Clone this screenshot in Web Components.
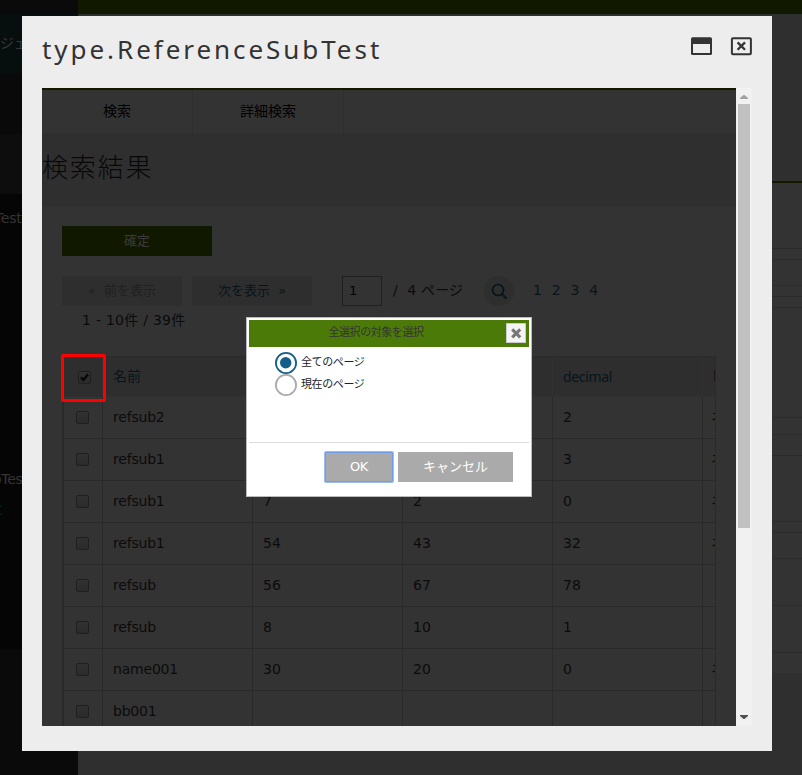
<!DOCTYPE html>
<html lang="ja"><head><meta charset="utf-8"><title>type.ReferenceSubTest</title>
<style>
html,body{margin:0;height:100%;overflow:hidden;background:#2f2f2f}
body{font:14px "DejaVu Sans","Noto Sans CJK JP",sans-serif;color:#0b0b0b}
</style></head><body><app-screen></app-screen>
<script>
const define=(name,html,setup)=>customElements.define(name,class extends HTMLElement{
  constructor(){super();this.attachShadow({mode:'open'})}
  connectedCallback(){
    this.shadowRoot.innerHTML='<style>*{box-sizing:border-box}:host{box-sizing:border-box}</style>'+(typeof html==='function'?html(this):html);
  }
});

define('side-menu',`<style>:host{display:block;width:78px;flex:none;background:#0a0a0a;color:#353535;overflow:hidden;white-space:nowrap;letter-spacing:-.3px}
div{overflow:hidden}
.a{height:14px}.b{height:60px;background:#070e0e;line-height:58px}.c{height:60px;background:#090909}.d{height:60px;background:#0d0d0d}
.e{height:455px;background:#050505;display:flex;flex-direction:column}
.e span{display:block;line-height:20px}.t1{padding-top:14px;text-indent:-5px}.t2{margin-top:241px;text-indent:-7px}.t3{margin-top:10px;color:#062820;text-indent:-10px}</style>
<div class="a"></div><div class="b">ジェ</div><div class="c"></div><div class="d"></div>
<div class="e"><span class="t1">Test</span><span class="t2">oTest</span><span class="t3">ヒ</span></div>`);

define('back-page',`<style>:host{display:flex;flex-direction:column;flex:1;background:#2f2f2f}
.bar{height:14px;background:#101900}.gap{height:167px}.rule{height:2px;background:#101900}
.body{background:#333;height:490px}.body div{border-bottom:1px solid #2b2b2b}</style>
<div class="bar"></div><div class="gap"></div><div class="rule"></div><div class="body">${[66,11,26,11,11,110,17,21,66,11,26,47,47].map(h=>`<div style="height:${h}px"></div>`).join('')}</div>`);

define('window-icons',`<style>:host{display:flex;gap:18px}svg{display:block}</style>
<svg width="22" height="20" viewBox="0 0 22 20"><rect x="1" y="1.2" width="21" height="17.8" rx="1.6" fill="#333"/><rect x="3" y="8" width="17" height="9" fill="#ededed"/></svg>
<svg width="22" height="20" viewBox="0 0 22 20"><rect x="1.9" y="2.2" width="19" height="16" rx="1" fill="none" stroke="#333" stroke-width="2"/><path d="M7.6 6.4l7.4 7.4M15 6.4l-7.4 7.4" stroke="#333" stroke-width="2.3"/></svg>`);

define('scroll-rail',`<style>:host{display:flex;flex-direction:column;align-items:center;width:16px;flex:none;background:#f1f1f1}
svg{display:block;flex:none}.t{width:12px;background:#c1c1c1;flex:1;margin-bottom:182px}</style>
<svg width="16" height="16"><path d="M4 11h8v-1L8.5 7h-1L4 10z" fill="#a3a3a3"/></svg><div class="t"></div>
<svg width="16" height="16"><path d="M4 5h8v1L8.5 9h-1L4 6z" fill="#505050"/></svg>`);

define('tab-bar',`<style>:host{display:flex;height:45px;border-top:2px solid #101900;background:#333}
div{width:151px;border-right:1px solid #2e2e2e;text-align:center;line-height:43px;color:#000}</style><div>検索</div><div>詳細検索</div>`);

define('page-heading',`<style>:host{display:block;height:73px;background:#2f2f2f;font-size:26px;letter-spacing:1.8px;line-height:70px;font-weight:300;color:#080808}</style><slot></slot>`);

define('flat-button',`<style>:host{display:block;flex:none;height:30px;line-height:29px;text-align:center;font-size:13px;background:#2e2e2e;color:#06151c;white-space:pre}
:host([kind=primary]){width:150px;background:#101900;color:#3a3a3a}
:host([kind=off]){width:120px;color:#202020}:host([kind=page]){width:120px}
:host([kind=ok]),:host([kind=cancel]){background:#aaa;color:#fff}
:host([kind=ok]){width:68px;height:30px;border:1px solid #6f9ee8;box-shadow:0 0 0 1px #9abdf4;border-radius:1px;line-height:28px;letter-spacing:-.4px;margin-right:1px}
:host([kind=cancel]){width:115px}</style><slot></slot>`);

define('pager-bar',`<style>:host{display:flex;height:30px;line-height:28px;align-items:stretch}
flat-button+flat-button{margin-left:10px}
.in{width:40px;border:1px solid #202020;margin-left:30px;padding-left:6px;font-size:13px;color:#000}
.of{margin-left:11px;width:91px;white-space:pre;letter-spacing:.2px}svg{flex:none}.n{display:flex;margin-left:19px;gap:9.8px;color:#06151c}</style>
<flat-button kind="off">«  前を表示</flat-button><flat-button kind="page">次を表示  »</flat-button>
<div class="in">1</div><div class="of">/  4 ページ</div>
<svg width="30" height="30"><circle cx="15" cy="15" r="15" fill="#2e2e2e"/><circle cx="14" cy="14" r="5.5" fill="none" stroke="#06151c" stroke-width="1.7"/><path d="M18 18l4.4 4.6" stroke="#06151c" stroke-width="2"/></svg>
<div class="n"><span>1</span><span>2</span><span>3</span><span>4</span></div>`);

define('check-box',e=>`<style>:host{display:block;width:13px;height:13px;border:1px solid #1f1f1f;border-radius:2px;background:linear-gradient(#313131,#2b2b2b)}
svg{display:block}</style>${e.hasAttribute('checked')?'<svg width="11" height="11"><path d="M2 5.4L4.5 8L9 2.3" fill="none" stroke="#080808" stroke-width="2.4"/></svg>':''}`);

const rows=[['refsub2','','','2','ネ'],['refsub1','','','3','ネ'],['refsub1','7','2','0','ネ'],['refsub1','54','43','32','ネ'],['refsub','56','67','78',''],['refsub','8','10','1',''],['name001','30','20','0','ネ'],['bb001','','','','']];
define('result-table',`<style>:host{display:block;width:654px;height:370px;overflow:hidden;border-left:2px solid #2a2a2a;border-right:1px solid #2a2a2a;border-top:1px solid #2a2a2a}
.r{display:grid;grid-template-columns:39px 150px 150px 150px 150px 150px;height:42px;border-bottom:1px solid #292929}
.r>div{border-right:1px solid #292929;padding-left:10px;line-height:41px;overflow:hidden;white-space:nowrap}
.r>div:last-child{text-indent:-2px}
.n{letter-spacing:-.2px}
.r>.k{padding:14px 0 0 12px}.h{background:#2e2e2e;height:40px;border-bottom-color:#303030;color:#06151c}.r.h>div{border-color:#313131;line-height:39px}.h>.k{padding:14px 0 0 14px}
.h .s{font-family:"Noto Sans",sans-serif;letter-spacing:-.35px}</style>
<div class="r h"><div class="k"><check-box checked></check-box></div><div>名前</div><div></div><div></div><div class="s">decimal</div><div style="text-indent:0;color:#0b0b0b">l</div></div>
${rows.map(r=>`<div class="r"><div class="k"><check-box></check-box></div>${r.map((c,i)=>`<div class="${i?'':'n'}">${c}</div>`).join('')}</div>`).join('')}`);

define('frame-page',`<style>:host{display:block;flex:1;min-width:0;background:#333;overflow:hidden}
main{padding:20px 20px 0}pager-bar{margin-top:20px}.c{padding-left:20px;height:30px;line-height:28px;margin-bottom:20px;letter-spacing:.26px}</style>
<tab-bar></tab-bar><page-heading>検索結果</page-heading>
<main><flat-button kind="primary">確定</flat-button><pager-bar></pager-bar><div class="c">1 - 10件 / 39件</div><result-table></result-table></main>`);

define('frame-window',`<style>:host{display:flex;flex-direction:column;background:#ededed;padding:0 20px 25px}
header{height:72px;flex:none;display:flex;justify-content:space-between}
h1{margin:0;font:400 26px/67px "Noto Sans",sans-serif;letter-spacing:2.95px;color:#333;white-space:nowrap}
window-icons{padding-top:20px}.b{flex:1;min-height:0;display:flex}</style>
<header><h1>type.ReferenceSubTest</h1><window-icons></window-icons></header><div class="b"><frame-page></frame-page><scroll-rail></scroll-rail></div>`);

define('radio-line',e=>`<style>:host{display:flex;height:22px;align-items:center;gap:4px;font-size:11px;letter-spacing:-.4px;line-height:20px;color:#222}svg{flex:none}span{padding-bottom:0}</style>
<svg width="22" height="22"><circle cx="11" cy="11" r="10.1" fill="#fff" stroke="${e.hasAttribute('on')?'#145f87':'#aaa'}" stroke-width="1.8"/>${e.hasAttribute('on')?'<circle cx="10.7" cy="10.7" r="5.7" fill="#145f87"/>':''}</svg><span><slot></slot></span>`);

define('select-dialog',`<style>:host{display:flex;flex-direction:column;background:#fff;border:1px solid #bbb;padding:2px}
header{height:27px;flex:none;background:#4c7a09;display:flex;color:#333;font-size:11px;letter-spacing:-.43px;line-height:25px}
h2{margin:0;flex:1;font:inherit;text-align:center;padding-right:3px}
.x{width:20px;height:20px;background:#f4f4f4;border:1px solid #ccc;margin:3px 3px 0 0}svg{display:block}
.b{height:95px;padding:5px 0 0 26px}footer{flex:1;border-top:1px solid #ddd;display:flex;justify-content:flex-end;gap:4px;padding:9px 16px 0 0}</style>
<header><h2>全選択の対象を選択</h2><div class="x"><svg width="18" height="18"><path d="M5.2 5.4l8 8M13.2 5.4l-8 8" stroke="#777" stroke-width="3"/></svg></div></header>
<div class="b"><radio-line on>全てのページ</radio-line><radio-line>現在のページ</radio-line></div>
<footer><flat-button kind="ok">OK</flat-button><flat-button kind="cancel">キャンセル</flat-button></footer>`);

define('app-screen',`<style>:host{display:flex;position:relative;width:802px;height:775px;overflow:hidden}
frame-window{position:absolute;left:22px;top:16px;width:750px;height:735px}
select-dialog{position:absolute;left:246px;top:317px;width:286px;height:180px}
.mark{position:absolute;left:61px;top:354px;width:45px;height:48px;border:3px solid #f00;border-radius:2px}</style>
<side-menu></side-menu><back-page></back-page><frame-window></frame-window><div class="mark"></div><select-dialog></select-dialog>`);
</script></body></html>
